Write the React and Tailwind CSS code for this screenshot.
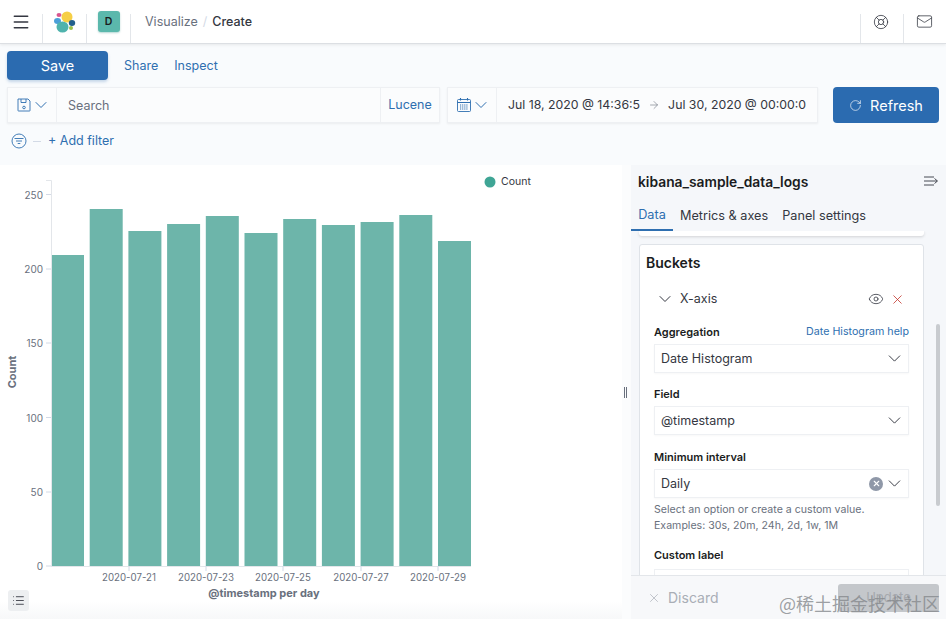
import { Menu, ChevronDown, ArrowRight, RotateCw, LifeBuoy, Mail, Eye, X, List } from 'lucide-react';

const bars = [255, 209, 231, 224, 216, 233, 219, 225, 222, 215, 241];
const yTicks = [[250, 194.5], [200, 269], [150, 343], [100, 417.5], [50, 492], [0, 566]];
const xTicks = [['2020-07-21', 129], ['2020-07-23', 206], ['2020-07-25', 283], ['2020-07-27', 361], ['2020-07-29', 438]];

function Logo() {
  return (
    <svg width="24" height="24" viewBox="0 0 24 24">
      <circle cx="14" cy="7" r="5.5" fill="#f6cf46" />
      <ellipse cx="6" cy="5" rx="2.5" ry="2" fill="#d9558f" />
      <ellipse cx="4.500" cy="11" rx="3.500" ry="3" fill="#4b9fd8" />
      <ellipse cx="19" cy="13" rx="3.200" ry="3" fill="#22608c" />
      <ellipse cx="9.500" cy="17" rx="6" ry="5.500" fill="#4fb3ad" />
      <circle cx="18" cy="18" r="2" fill="#9cc24a" />
    </svg>
  );
}

function FilterIcon() {
  return (
    <svg width="16" height="16" viewBox="0 0 16 16" fill="none" stroke="#2f6fb0" strokeWidth="0.9">
      <circle cx="8" cy="8" r="7" />
      <path d="M3.500 5.500h9M5 8h6M6.700 10.500h2.600" />
    </svg>
  );
}

function FloppyIcon() {
  return (
    <svg width="14" height="14" viewBox="0 0 14 14" fill="none" stroke="#2f6fb0" strokeWidth="0.9">
      <path d="M1 1h10l2 2v9.500a.5.5 0 0 1-.5.5h-11a.5.5 0 0 1-.5-.5z" />
      <path d="M4 1v3.500h5V1" />
      <circle cx="7" cy="9.500" r="1.300" />
    </svg>
  );
}

function CalendarIcon() {
  return (
    <svg width="14" height="14" viewBox="0 0 14 14" fill="none" stroke="#2f6fb0" strokeWidth="0.9">
      <rect x="0.500" y="1.500" width="13" height="12" rx="1" />
      <path d="M0.500 4.500h13M3.500 0v2.500M10.500 0v2.500" strokeWidth="1.100" />
      <path d="M3 7h8M3 9h8M3 11h8" strokeDasharray="1.200 0.900" strokeWidth="1.100" />
    </svg>
  );
}

function Field({ label, value, right, className = '' }) {
  return (
    <div className={className}>
      <div className="flex justify-between items-center h-4 text-[11px] leading-4">
        <span className="font-semibold text-[#1a1c21]">{label}</span>
        {right && <span className="text-[10.7px] text-[#2f6fb0]">{right}</span>}
      </div>
      <div className="mt-[4px] h-[29px] bg-white border border-[#eef0f3] flex items-center pl-[6px] pr-[3px] text-[12.5px] text-[#343741] shadow-[0_1px_2px_rgba(0,0,0,0.03)]">
        <span className="flex-1 pt-[1px]">{value}</span>
        {value === 'Daily' && (
          <span className="w-[14px] h-[14px] mr-[1px] rounded-full bg-[#8f98a8] text-white flex items-center justify-center">
            <X size={9} strokeWidth={3} />
          </span>
        )}
        <ChevronDown size={21} strokeWidth={1.1} className="text-[#343741]" />
      </div>
    </div>
  );
}

export default function App() {
  return (
    <div className="relative w-[946px] h-[619px] overflow-hidden flex flex-col bg-[#f9fbfd] font-['Inter',sans-serif] text-[#343741]">
      {/* top nav */}
      <header className="h-[44px] shrink-0 bg-white border-b border-[#dcdfe3] shadow-[0_1px_3px_rgba(0,0,0,0.08)] flex items-stretch z-10">
        <div className="w-[43px] flex items-center justify-center mt-[14px] border-r border-[#e3e6ea]">
          <Menu size={20} strokeWidth={1.8} className="-mt-[14px] text-[#343741]" />
        </div>
        <div className="w-[44px] flex items-center justify-center mt-[14px] border-r border-[#e3e6ea]">
          <div className="-mt-[14px]"><Logo /></div>
        </div>
        <div className="w-[44px] flex items-center justify-center mt-[14px] border-r border-[#e3e6ea]">
          <div className="-mt-[14px] w-[22px] h-[21px] rounded-[3px] bg-[#5bb8ac] text-[#1a1c21] text-[10.5px] font-semibold flex items-center justify-center shadow-[0_1px_2px_rgba(0,120,110,0.3)]">D</div>
        </div>
        <nav className="flex items-center pl-[14px] pt-[1px] text-[12.5px]">
          <span className="text-[#69707d]">Visualize</span>
          <span className="mx-[5px] text-[#d3dae6]">/</span>
          <span className="font-medium text-[#343741]">Create</span>
        </nav>
        <div className="ml-auto flex items-stretch">
          <div className="w-[43px] flex items-center justify-center mt-[14px] border-l border-[#e3e6ea]">
            <LifeBuoy size={16} strokeWidth={1.2} className="-mt-[14px] -ml-[2px] text-[#343741]" />
          </div>
          <div className="w-[43px] flex items-center justify-center mt-[14px] border-l border-[#e3e6ea]">
            <Mail size={17} strokeWidth={1.1} className="-mt-[14px] -ml-[1px] text-[#343741]" />
          </div>
        </div>
      </header>

      {/* toolbar */}
      <div className="h-[121px] shrink-0 px-[7px] pt-[7px]">
        <div className="flex items-center h-[29px]">
          <button className="w-[101px] h-[29px] pt-[1px] rounded-[4px] bg-[#2b6bb0] text-white text-[14.5px] shadow-[0_2px_3px_rgba(43,107,176,0.25)]">Save</button>
          <span className="ml-[16px] pt-[1px] text-[12.5px] text-[#2f6fb0]">Share</span>
          <span className="ml-[16px] pt-[1px] text-[12.5px] text-[#2f6fb0]">Inspect</span>
        </div>
        <div className="flex mt-[7px] h-[36px]">
          <div className="w-[433px] flex bg-[#fbfcfd] border border-[#eef0f3] shadow-[0_1px_2px_rgba(0,0,0,0.06)]">
            <div className="w-[49px] shrink-0 flex items-center pl-[9px] border-r border-[#eef0f3] text-[#2f6fb0]">
              <FloppyIcon />
              <ChevronDown size={20} strokeWidth={1.2} />
            </div>
            <div className="flex-1 flex items-center pl-[11px] pt-[2px] text-[12.5px] text-[#69707d]">Search</div>
            <div className="w-[59px] shrink-0 flex items-center justify-center border-l border-[#eef0f3] text-[12.5px] text-[#2f6fb0]">Lucene</div>
          </div>
          <div className="ml-[7px] w-[371px] flex bg-[#fbfcfd] border border-[#eef0f3] shadow-[0_1px_2px_rgba(0,0,0,0.06)]">
            <div className="w-[49px] shrink-0 flex items-center pl-[9px] border-r border-[#eef0f3] text-[#2f6fb0]">
              <CalendarIcon />
              <ChevronDown size={20} strokeWidth={1.2} />
            </div>
            <div className="flex-1 flex items-center pl-[11px] text-[12.3px] text-[#343741] whitespace-nowrap">
              <span>Jul 18, 2020 @ 14:36:5</span>
              <ArrowRight size={12} strokeWidth={1.2} className="mx-[8px] text-[#69707d]" />
              <span>Jul 30, 2020 @ 00:00:0</span>
            </div>
          </div>
          <button className="ml-[15px] w-[106px] pt-[1px] rounded-[4px] bg-[#2b6bb0] text-white text-[14.5px] flex items-center justify-center gap-[8px]">
            <RotateCw size={13} strokeWidth={1.2} />
            Refresh
          </button>
        </div>
        <div className="flex items-center mt-[9px] h-[18px] pl-[4px] text-[12.5px] text-[#2f6fb0]">
          <FilterIcon />
          <span className="ml-[6px] w-[8px] h-px bg-[#d3dae6]" />
          <span className="ml-[7px]">+ Add filter</span>
        </div>
      </div>

      {/* workspace */}
      <main className="flex flex-1 min-h-0">
        <section className="relative w-[622px] shrink-0 bg-gradient-to-b from-white from-[96%] to-[#f7f8f9]">
          <svg width="622" height="454" viewBox="0 165 622 454" className="block font-['Inter',sans-serif]">
            {bars.map((top, i) => (
              <rect key={i} x={51 + i * 38.7} y={top} width="33" height={566 - top} fill="#6db5aa" />
            ))}
            <path d="M46 180.500h5.500V566M51 566.500h420" fill="none" stroke="#e3e6ea" />
            {yTicks.map(([v, y]) => (
              <g key={v}>
                <line x1="46" x2="51" y1={y} y2={y} stroke="#d3dae6" />
                <text x="43" y={y + 4} textAnchor="end" fontSize="10" fill="#69707d">{v}</text>
              </g>
            ))}
            {xTicks.map(([label, x]) => (
              <g key={label}>
                <line x1={x} x2={x} y1="566" y2="571" stroke="#d3dae6" />
                <text x={x} y="581" textAnchor="middle" fontSize="9.700" fill="#69707d">{label}</text>
              </g>
            ))}
            <text x="264" y="597" textAnchor="middle" fontSize="11" fontWeight="700" fill="#69707d">@timestamp per day</text>
            <text transform="translate(16 372) rotate(-90)" textAnchor="middle" fontSize="11" fontWeight="700" fill="#69707d">Count</text>
            <circle cx="490" cy="182" r="5.500" fill="#3fa595" />
            <text x="501" y="184.500" fontSize="10.500" fill="#343741">Count</text>
          </svg>
          <button className="absolute left-[8px] bottom-[8px] w-[21px] h-[21px] rounded-[3px] bg-[#edeff1] flex items-center justify-center text-[#343741]">
            <List size={13} strokeWidth={1.6} />
          </button>
        </section>

        <div className="w-[9px] shrink-0 bg-[#fbfcfd] flex items-center justify-center gap-px pr-[2px] text-[#69707d]">
          <span className="w-px h-[11px] bg-[#69707d]" />
          <span className="w-px h-[11px] bg-[#69707d]" />
        </div>

        {/* side panel */}
        <aside className="relative flex-1 min-w-0 flex flex-col bg-[#f5f7fa] overflow-hidden">
          <div className="relative h-[66px] shrink-0">
            <div className="flex items-start justify-between pl-[7px] pr-[7px] pt-[7px] h-[35px]">
              <h2 className="text-[13.8px] leading-5 font-semibold text-[#1a1c21]">kibana_sample_data_logs</h2>
              <svg width="15" height="12" viewBox="0 0 15 12" fill="none" stroke="#343741" strokeWidth="0.9" className="mt-[3px]">
                <path d="M0 2h10M0 6h13M0 10h10M10.500 3.500 13.500 6l-3 2.500" />
              </svg>
            </div>
            <div className="flex items-center h-[31px] text-[12.7px]">
              <span className="w-[42px] h-[31px] flex items-center justify-center text-[#2f6fb0] border-b-[2px] border-[#2f6fb0]">Data</span>
              <span className="ml-[7px]">Metrics &amp; axes</span>
              <span className="ml-[14px]">Panel settings</span>
            </div>
          </div>
          <div className="flex-1 min-h-0 overflow-hidden pl-[8px] pr-[22px]">
            <div className="h-[5px] bg-white rounded-b-[3px] shadow-[0_1px_3px_rgba(0,0,0,0.15)]" />
            <div className="mt-[8px] h-[400px] bg-white border border-[#dfe3e8] rounded-[3px] pt-[8px] px-[6px]">
              <h3 className="text-[14px] font-semibold leading-[20px] text-[#1a1c21]">Buckets</h3>
              <div className="mt-[14px] h-[24px] flex items-center pl-[9px] pr-[12px] text-[12.5px]">
                <ChevronDown size={20} strokeWidth={1.2} />
                <span className="ml-[5px] flex-1">X-axis</span>
                <Eye size={16} strokeWidth={1.2} />
                <X size={15} strokeWidth={1.2} className="ml-[6px] text-[#bd271e]" />
              </div>
              <div className="px-[8px] pt-[13px]">
                <Field label="Aggregation" right="Date Histogram help" value="Date Histogram" />
                <Field label="Field" value="@timestamp" className="mt-[13px]" />
                <Field label="Minimum interval" value="Daily" className="mt-[14px]" />
                <p className="mt-[4px] text-[10.6px] leading-[16px] text-[#69707d]">
                  Select an option or create a custom value.<br />Examples: 30s, 20m, 24h, 2d, 1w, 1M
                </p>
                <div className="mt-[13px] text-[11px] leading-4 font-semibold text-[#1a1c21]">Custom label</div>
                <div className="mt-[6px] h-[29px] bg-white border border-[#eef0f3]" />
              </div>
            </div>
          </div>
          <div className="h-[44px] shrink-0 border-t border-[#e3e6ea] bg-[#f7f8fa] flex items-center pl-[16px] pr-[7px] text-[14px] text-[#a9aeb6] z-10 relative">
            <X size={14} strokeWidth={1.2} />
            <span className="ml-[7px] flex-1">Discard</span>
            <span className="w-[101px] h-[28px] rounded-[3px] bg-[#c4c7cb] flex items-center justify-center text-[13px] text-[#a6a9ae]">Update</span>
          </div>
          <div className="absolute right-[6px] top-[159px] w-[4px] h-[182px] rounded-full bg-[#c8cbcf]" />
        </aside>
      </main>

      <span className="absolute right-[6px] bottom-[5px] text-[18px] leading-[22px] text-[#85888c]/80 font-['Noto_Sans_CJK_SC',sans-serif] z-20">@稀土掘金技术社区</span>
    </div>
  );
}
